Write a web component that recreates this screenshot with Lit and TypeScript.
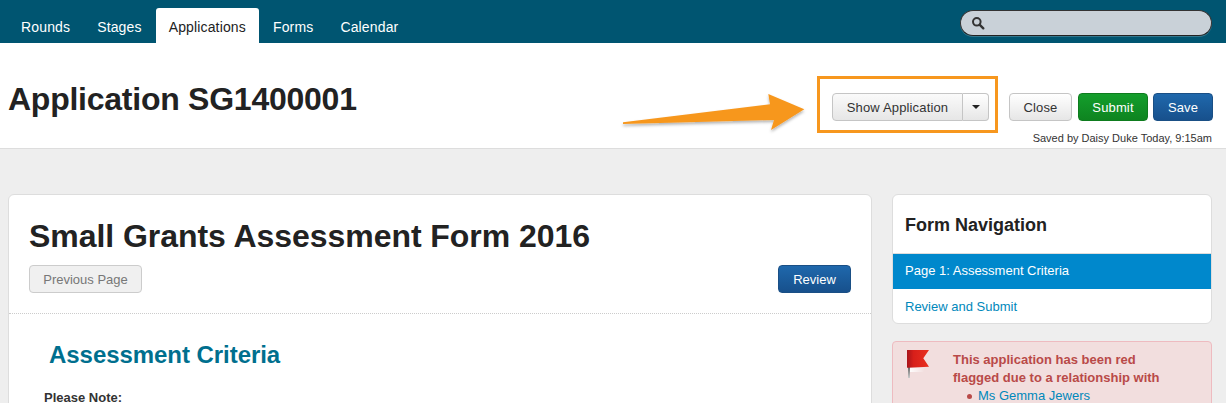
import { LitElement, html, css } from "lit";
import { customElement } from "lit/decorators.js";

@customElement("app-root")
export class AppRoot extends LitElement {
  static styles = css`
    :host { display: block; width: 1226px; height: 403px; overflow: hidden; position: relative; background: #eee; font-family: "Liberation Sans", Arial, sans-serif; color: #333; font-size: 13px; }
    * { box-sizing: border-box; }
    .nav { height: 43px; background: #005571; display: flex; align-items: flex-end; justify-content: space-between; padding: 0 14px 0 8px; }
    .tabs { display: flex; gap: 1px; }
    .tab { height: 35px; padding: 0 13px; line-height: 39px; font-size: 14px; letter-spacing: 0.15px; color: #fff; border-radius: 3px 3px 0 0; }
    .tab.active { background: #fff; color: #222; }
    .search { align-self: flex-start; margin-top: 10px; width: 252px; height: 26px; border-radius: 13px; background: #c9d1d8; border: 1px solid #333; border-bottom-color: #222; display: flex; align-items: center; padding-left: 10px; box-shadow: 0 1px 0 rgba(255,255,255,.2); }
    .head { height: 106px; background: #fff; border-bottom: 1px solid #ddd; display: flex; justify-content: space-between; padding: 0 13px 0 8px; }
    h1 { margin: 37px 0 0; font-size: 32px; line-height: 38px; font-weight: bold; color: #222; letter-spacing: -0.25px; }
    .actions { display: flex; flex-direction: column; align-items: flex-end; padding-top: 50px; }
    .btns { display: flex; align-items: stretch; height: 28px; }
    .btn { display: flex; align-items: center; justify-content: center; height: 28px; font-size: 13px; letter-spacing: 0.15px; border-radius: 4px; border: 1px solid #c5c5c5; background: linear-gradient(#fff, #e6e6e6); color: #333; }
    .group { display: flex; margin-right: 20px; }
    .g1 { width: 131px; border-radius: 4px 0 0 4px; background: linear-gradient(#fafafa, #e6e6e6); }
    .g2 { width: 26px; border-left: 0; border-radius: 0 4px 4px 0; }
    .caret { width: 0; height: 0; border: 4px solid transparent; border-top-color: #222; border-bottom: 0; }
    .close { width: 63px; margin-right: 6px; }
    .submit { width: 70px; margin-right: 5px; color: #fff; border-color: #0e7c1e; background: linear-gradient(#149e2c, #0e8420); }
    .save { width: 60px; color: #fff; border-color: #1a4f85; background: linear-gradient(#1f68ac, #17508c); }
    .saved { font-size: 11px; line-height: 13px; margin-top: 11px; margin-right: 1px; color: #333; }
    .main { display: grid; grid-template-columns: 864px 320px; gap: 20px; padding: 45px 0 0 8px; align-items: start; }
    .card { background: #fff; border: 1px solid #ddd; border-radius: 6px; }
    .form { height: 300px; }
    .fhead { padding: 21px 20px 20px; border-bottom: 1px dotted #ccc; height: 119px; }
    h2 { margin: 0; font-size: 32px; line-height: 40px; font-weight: bold; color: #222; letter-spacing: -0.05px; }
    .pager { display: flex; justify-content: space-between; margin-top: 9px; }
    .prev { width: 113px; height: 28px; background: #f0f0f0; border-color: #ccc; color: #777; letter-spacing: 0; }
    .review { width: 73px; height: 28px; color: #fff; border-color: #1a4f85; background: linear-gradient(#1f68ac, #17508c); letter-spacing: 0; }
    h3 { margin: 26px 0 0 40px; font-size: 24px; line-height: 29px; font-weight: bold; color: #006f8e; letter-spacing: -0.05px; }
    .note { margin: 21px 0 0 35px; font-weight: bold; font-size: 13px; line-height: 16px; }
    .side { display: flex; flex-direction: column; gap: 17px; }
    .fnav { height: 130px; overflow: hidden; }
    .fnav h4 { margin: 0; height: 59px; padding: 0 12px; font-size: 18px; line-height: 60px; font-weight: bold; color: #222; border-bottom: 1px solid #ddd; }
    .item { height: 34px; padding: 0 12px; font-size: 13px; line-height: 34px; color: #0088bb; }
    .item.on { background: #0088cc; color: #fff; height: 35px; margin-bottom: 1px; }
    .alert { height: 100px; background: #f2dede; border: 1px solid #eebbc0; border-radius: 4px; display: flex; color: #b94a48; font-weight: bold; font-size: 13px; line-height: 18px; padding: 9px 0 0 14px; }
    .flag { flex: none; width: 24px; height: 30px; margin: -1px 22px 0 0; }
    .alert ul { margin: 0; padding: 0 0 0 25px; list-style: none; font-weight: normal; }
    .alert li { position: relative; color: #0088bb; font-size: 13px; }
    .alert li::before { content: ""; position: absolute; left: -11px; top: 7px; width: 5px; height: 5px; border-radius: 50%; background: #b94a48; }
    .hl { position: absolute; left: 817px; top: 76px; width: 181px; height: 57px; border: 3px solid #f7971e; pointer-events: none; }
    .arrow { position: absolute; left: 615px; top: 85px; width: 200px; height: 55px; pointer-events: none; }
  `;

  render() {
    return html`
      <div class="nav">
        <div class="tabs">
          ${["Rounds", "Stages", "Applications", "Forms", "Calendar"].map(
            (t) => html`<div class="tab ${t === "Applications" ? "active" : ""}">${t}</div>`
          )}
        </div>
        <div class="search">
          <svg width="14" height="14" viewBox="0 0 14 14" fill="none" stroke="#333" stroke-width="2"><circle cx="5.8" cy="5.8" r="3.8"/><path d="M8.8 8.8 L12.3 12.3" stroke-width="2.4" stroke-linecap="round"/></svg>
        </div>
      </div>
      <div class="head">
        <h1>Application SG1400001</h1>
        <div class="actions">
          <div class="btns">
            <div class="group">
              <div class="btn g1">Show Application</div>
              <div class="btn g2"><span class="caret"></span></div>
            </div>
            <div class="btn close">Close</div>
            <div class="btn submit">Submit</div>
            <div class="btn save">Save</div>
          </div>
          <div class="saved">Saved by Daisy Duke Today, 9:15am</div>
        </div>
      </div>
      <div class="main">
        <div class="card form">
          <div class="fhead">
            <h2>Small Grants Assessment Form 2016</h2>
            <div class="pager">
              <div class="btn prev">Previous Page</div>
              <div class="btn review">Review</div>
            </div>
          </div>
          <h3>Assessment Criteria</h3>
          <div class="note">Please Note:</div>
        </div>
        <div class="side">
          <div class="card fnav">
            <h4>Form Navigation</h4>
            <div class="item on">Page 1: Assessment Criteria</div>
            <div class="item">Review and Submit</div>
          </div>
          <div class="alert">
            <svg class="flag" viewBox="0 0 24 30">
              <defs>
                <linearGradient id="fl" x1="0" x2="1" y1="0" y2="0"><stop offset="0" stop-color="#a8141a"/><stop offset=".3" stop-color="#d81f1a"/><stop offset="1" stop-color="#e9301f"/></linearGradient>
                <linearGradient id="po" x1="0" x2="0" y1="0" y2="1"><stop offset="0" stop-color="#666"/><stop offset="1" stop-color="#ccc"/></linearGradient>
                <linearGradient id="sd" x1="0" x2="1" y1="0" y2="0"><stop offset="0" stop-color="#fff" stop-opacity=".9"/><stop offset="1" stop-color="#fff" stop-opacity="0"/></linearGradient>
              </defs>
              <rect x="1" y="17" width="2" height="11" fill="url(#po)"/>
              <path d="M3 18h15l-2 4h-13z" fill="url(#sd)"/>
              <path d="M0 0 L22 0 L16.3 8.3 L22 16.7 L0 17.7 Z" fill="url(#fl)"/>
            </svg>
            <div>
              This application has been red<br />flagged due to a relationship with
              <ul><li>Ms Gemma Jewers</li></ul>
            </div>
          </div>
        </div>
      </div>
      <div class="hl"></div>
      <svg class="arrow" viewBox="0 0 200 55">
        <defs><filter id="sh" x="-5%" y="-20%" width="110%" height="150%"><feDropShadow dx="0" dy="2" stdDeviation="1.5" flood-color="#000" flood-opacity=".3"/></filter></defs>
        <path d="M8 37.3 L8 39 L159 35 L156 45 L189.3 24.3 L153.3 9 L155 19.3 Z" fill="#f7971e" filter="url(#sh)"/>
      </svg>
    `;
  }
}
